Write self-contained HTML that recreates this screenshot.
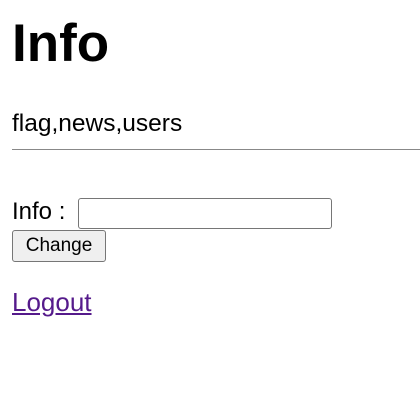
<!DOCTYPE html>
<html><head><style>
body{margin:0;width:420px;height:416px;background:#fff;font-family:"Liberation Sans",sans-serif;color:#000;position:relative;overflow:hidden}
.a{position:absolute;left:12px;white-space:nowrap}
h1{position:absolute;left:12px;top:11px;margin:0;font-size:53px;font-weight:bold;line-height:66px}
#t{top:109px;font-size:24.5px;line-height:30px}
hr{position:absolute;left:12px;top:149px;width:408px;margin:0;border:0;border-top:1px solid #888;height:0}
#i{top:197px;font-size:24px;line-height:30px}
input{position:absolute;left:78px;top:198px;width:254px;height:31px;box-sizing:border-box;border:1px solid #767676;border-radius:3px;margin:0}
button{position:absolute;left:12px;top:230px;width:94px;height:32px;box-sizing:border-box;border:1px solid #767676;border-radius:3px;background:#efefef;font-family:"Liberation Sans",sans-serif;font-size:19px;padding:0}
a{position:absolute;left:12px;top:287px;font-size:26px;line-height:30px;color:#551a8b}
</style></head><body>
<h1>Info</h1>
<div class="a" id="t">flag,news,users</div>
<hr>
<div class="a" id="i">Info :</div>
<input type="text">
<button>Change</button>
<a href="#">Logout</a>
</body></html>
